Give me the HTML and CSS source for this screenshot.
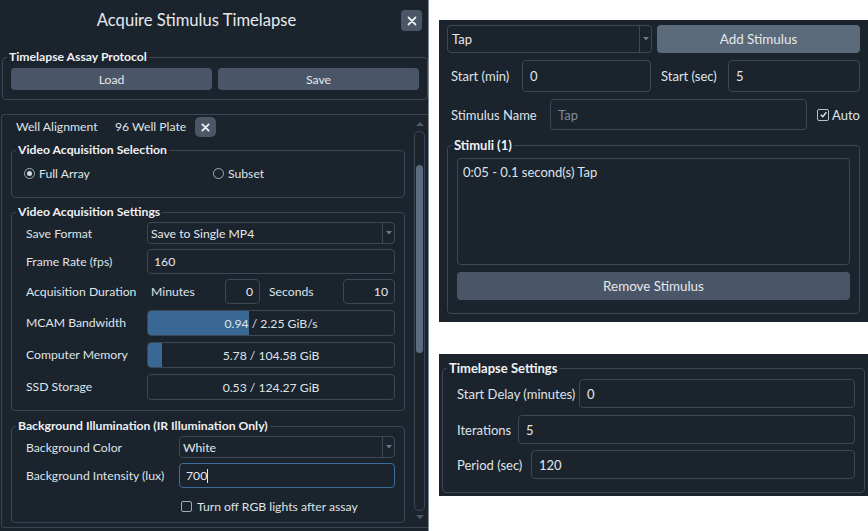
FILE: index.html
```html
<!DOCTYPE html>
<html>
<head>
<meta charset="utf-8">
<link rel="stylesheet" href="styles.css">
</head>
<body>
<div class="page">
  <div class="dialog">
    <div class="titlebar">
      <div class="title">Acquire Stimulus Timelapse</div>
      <div class="xbtn"><svg width="10" height="10" viewBox="0 0 10 10"><path d="M1.5 1.5L8.5 8.5M8.5 1.5L1.5 8.5" stroke="#e8ecf0" stroke-width="1.8" stroke-linecap="round"/></svg></div>
    </div>
    <fieldset class="group protocol">
      <legend>Timelapse Assay Protocol</legend>
      <div class="gbody btnrow">
        <div class="btn">Load</div>
        <div class="btn">Save</div>
      </div>
    </fieldset>
    <div class="scrollarea">
      <div class="scrollcontent">
        <div class="wellrow">
          <span class="well-label">Well Alignment</span>
          <span class="well-value">96 Well Plate</span>
          <span class="xsmall"><svg width="9" height="9" viewBox="0 0 10 10"><path d="M1.5 1.5L8.5 8.5M8.5 1.5L1.5 8.5" stroke="#eef1f4" stroke-width="2" stroke-linecap="round"/></svg></span>
        </div>
        <fieldset class="group sel">
          <legend>Video Acquisition Selection</legend>
          <div class="gbody radiorow">
            <label class="radio"><span class="rcircle on"></span>Full Array</label>
            <label class="radio"><span class="rcircle"></span>Subset</label>
          </div>
        </fieldset>
        <fieldset class="group settings">
          <legend>Video Acquisition Settings</legend>
          <div class="gbody form">
            <div class="lbl">Save Format</div>
            <div class="combo h22"><span class="combo-text">Save to Single MP4</span><span class="combo-arrow"><svg width="6" height="4" viewBox="0 0 6 4"><path d="M0 0H6L3 3.5Z" fill="#6d7885"/></svg></span></div>
            <div class="lbl">Frame Rate (fps)</div>
            <div class="input h25">160</div>
            <div class="lbl">Acquisition Duration</div>
            <div class="duration">
              <span class="dlbl">Minutes</span>
              <div class="input num minutes">0</div>
              <span class="dlbl">Seconds</span>
              <div class="input num seconds">10</div>
            </div>
            <div class="lbl">MCAM Bandwidth</div>
            <div class="bar"><div class="fill" style="width:41%"></div><span class="bartext">0.94 / 2.25 GiB/s</span></div>
            <div class="lbl">Computer Memory</div>
            <div class="bar"><div class="fill" style="width:5.5%"></div><span class="bartext">5.78 / 104.58 GiB</span></div>
            <div class="lbl">SSD Storage</div>
            <div class="bar"><div class="fill" style="width:0%"></div><span class="bartext">0.53 / 124.27 GiB</span></div>
          </div>
        </fieldset>
        <fieldset class="group bg">
          <legend>Background Illumination (IR Illumination Only)</legend>
          <div class="gbody form wide">
            <div class="lbl">Background Color</div>
            <div class="combo h22"><span class="combo-text">White</span><span class="combo-arrow"><svg width="6" height="4" viewBox="0 0 6 4"><path d="M0 0H6L3 3.5Z" fill="#6d7885"/></svg></span></div>
            <div class="lbl">Background Intensity (lux)</div>
            <div class="input h25 focus">700<span class="caret"></span></div>
            <div></div>
            <label class="check rgb"><span class="cbox"></span>Turn off RGB lights after assay</label>
          </div>
        </fieldset>
      </div>
      <div class="scrollbar">
        <div class="sarrow up"></div>
        <div class="track"><div class="handle"></div></div>
        <div class="sarrow down"></div>
      </div>
    </div>
  </div>

  <div class="rightcol">
    <div class="panel stim">
      <div class="row1">
        <div class="combo big"><span class="combo-text">Tap</span><span class="combo-arrow"><svg width="6" height="4" viewBox="0 0 6 4"><path d="M0 0H6L3 3.5Z" fill="#6d7885"/></svg></span></div>
        <div class="btn big light">Add Stimulus</div>
      </div>
      <div class="row2">
        <div class="half h-min"><span class="rlbl">Start (min)</span><div class="input big">0</div></div>
        <div class="half h-sec"><span class="rlbl">Start (sec)</span><div class="input big">5</div></div>
      </div>
      <div class="row3">
        <span class="rlbl name">Stimulus Name</span>
        <div class="input big placeholder">Tap</div>
        <label class="check auto"><span class="cbox checked"><svg width="9" height="9" viewBox="0 0 10 10"><path d="M2 5.2L4.2 7.5L8.2 2.5" stroke="#e6eaee" stroke-width="1.5" fill="none"/></svg></span>Auto</label>
      </div>
      <fieldset class="group stimuli">
        <legend>Stimuli (1)</legend>
        <div class="gbody">
          <div class="listbox">0:05 - 0.1 second(s) Tap</div>
          <div class="btn big remove">Remove Stimulus</div>
        </div>
      </fieldset>
    </div>

    <div class="panel tl">
      <fieldset class="group tlset">
        <legend>Timelapse Settings</legend>
        <div class="gbody">
          <div class="tlrow r1"><span class="rlbl">Start Delay (minutes)</span><div class="input big">0</div></div>
          <div class="tlrow r2"><span class="rlbl">Iterations</span><div class="input big">5</div></div>
          <div class="tlrow r3"><span class="rlbl">Period (sec)</span><div class="input big">120</div></div>
        </div>
      </fieldset>
    </div>
  </div>
</div>
</body>
</html>
```
FILE: styles.css
```css
* { box-sizing: border-box; }
html, body { margin: 0; padding: 0; }
body {
  background: #ffffff;
  width: 868px;
  height: 531px;
  overflow: hidden;
  font-family: Lato, "Open Sans", sans-serif;
  font-size: 12.2px;
  color: #dfe4e9;
}
.page { display: flex; align-items: flex-start; }

/* ---------- left dialog ---------- */
.dialog {
  width: 429px;
  height: 531px;
  background: #1b232d;
  border-right: 1px solid #7f8893;
  display: flex;
  flex-direction: column;
}
.titlebar {
  height: 49px;
  display: flex;
  align-items: flex-start;
  padding-top: 10px;
}
.title {
  flex: 1;
  text-align: center;
  font-size: 16.6px;
  line-height: 21px;
  color: #e6e9ed;
}
.xbtn {
  width: 21px;
  height: 21px;
  margin-left: 8px;
  margin-right: 6px;
  background: #4b5767;
  border-radius: 4px;
  display: flex;
  align-items: center;
  justify-content: center;
}

.group {
  margin: 0;
  padding: 0;
  border: 1px solid #3b4655;
  border-radius: 4px;
  min-width: 0;
}
.group > legend {
  margin-left: 4px;
  padding: 0 2px;
  font-weight: 700;
  font-size: 12.2px;
  line-height: 16px;
  color: #eef1f4;
}
.protocol { margin-left: 2px; width: 426px; }
.protocol .gbody { padding: 3px 8px 9px 8px; }
.btnrow { display: flex; gap: 6px; }
.btn {
  flex: 1;
  height: 22px;
  background: #4a5667;
  border-radius: 4px;
  display: flex;
  align-items: center;
  justify-content: center;
  color: #e4e8ec;
}

.scrollarea {
  margin-top: 14px;
  margin-left: 1px;
  height: 414px;
  border: 1px solid #3b4655;
  border-right: none;
  border-radius: 4px 0 0 4px;
  display: flex;
}
.scrollcontent {
  width: 403px;
  padding-left: 9px;
  padding-bottom: 4px;
}
.wellrow {
  height: 22px;
  display: flex;
  align-items: center;
  padding-left: 5px;
}
.well-label { width: 99px; }
.well-value { width: 80px; }
.xsmall {
  width: 21px;
  height: 20px;
  margin-top: 2px;
  background: #4b5767;
  border-radius: 5px;
  display: flex;
  align-items: center;
  justify-content: center;
}
.sel { margin-top: 5px; width: 394px; }
.sel .gbody { padding: 5px 0 14px 12px; }
.radiorow {
  display: grid;
  grid-template-columns: 189px 1fr;
  align-items: center;
  height: 39px;
  align-content: start;
}
.radio { display: flex; align-items: center; gap: 4px; height: 20px; }
.rcircle {
  width: 11px;
  height: 11px;
  border: 1px solid #a3acb6;
  border-radius: 50%;
  display: flex;
  align-items: center;
  justify-content: center;
}
.rcircle.on::after {
  content: "";
  width: 5px;
  height: 5px;
  border-radius: 50%;
  background: #d3d9df;
}

.settings { margin-top: 6px; width: 394px; }
.settings .gbody { padding: 2px 9px 10px 14px; }
.form {
  display: grid;
  grid-template-columns: 121px 1fr;
  align-items: center;
  row-gap: 5px;
}
.form.wide { grid-template-columns: 153px 1fr; }
.form .lbl { white-space: nowrap; }
.h22 { height: 22px; }
.h25 { height: 25px; }

.input {
  border: 1px solid #3d4857;
  border-radius: 4px;
  background: #1b232d;
  display: flex;
  align-items: center;
  padding-left: 6px;
  color: #e4e8ec;
}
.input.focus { border-color: #3e6d9a; }
.caret {
  display: inline-block;
  width: 1px;
  height: 14px;
  background: #e4e8ec;
}
.combo {
  border: 1px solid #3d4857;
  border-radius: 4px;
  display: flex;
  align-items: stretch;
  color: #e4e8ec;
}
.combo-text { flex: 1; display: flex; align-items: center; padding-left: 3px; }
.combo-arrow {
  width: 12px;
  border-left: 1px solid #3d4857;
  display: flex;
  align-items: center;
  justify-content: center;
}
.duration {
  height: 25px;
  display: flex;
  align-items: center;
}
.dlbl { width: 78px; padding-left: 4px; }
.duration .dlbl:nth-of-type(2) { width: 83px; padding-left: 9px; }
.input.num { height: 25px; justify-content: flex-end; padding-right: 6px; padding-left: 0; }
.minutes { width: 35px; }
.seconds { width: 52px; }
.bar {
  position: relative;
  height: 26px;
  margin-top: 1px;
  border: 1px solid #3d4857;
  border-radius: 4px;
  overflow: hidden;
  display: flex;
  align-items: center;
  justify-content: center;
}
.fill {
  position: absolute;
  left: 0; top: 0; bottom: 0;
  background: #3a6894;
}
.bartext { position: relative; }

.bg { margin-top: 7px; width: 394px; }
.bg .gbody { padding: 2px 9px 6px 14px; }
.check { display: flex; align-items: center; gap: 5px; white-space: nowrap; }
.rgb { height: 20px; margin-top: 3px; padding-left: 2px; }
.cbox {
  width: 11px;
  height: 11px;
  border: 1px solid #a3acb6;
  border-radius: 2px;
  display: flex;
  align-items: center;
  justify-content: center;
  flex-shrink: 0;
}

.scrollbar {
  width: 11px;
  margin-left: 9px;
  margin-right: 3px;
  display: flex;
  flex-direction: column;
  align-items: center;
  padding: 7px 0 8px;
}
.sarrow { width: 0; height: 0; border-left: 4px solid transparent; border-right: 4px solid transparent; }
.sarrow.up { border-bottom: 4px solid #4f5a68; }
.sarrow.down { border-top: 4px solid #4f5a68; }
.track {
  flex: 1;
  width: 11px;
  margin: 5px 0 4px;
  border: 1px solid #3b4655;
  border-radius: 5px;
  padding: 33px 1px 0;
}
.handle {
  height: 188px;
  background: #5c6c7e;
  border-radius: 4px;
}

/* ---------- right panels ---------- */
.rightcol {
  margin-left: 10px;
  width: 429px;
  display: flex;
  flex-direction: column;
}
.panel { background: #1b232d; width: 429px; }
.stim {
  margin-top: 20px;
  height: 302px;
  padding: 5px 8px 0 8px;
  font-size: 13px;
}
.rlbl { white-space: nowrap; flex-shrink: 0; }
.row1 { display: flex; gap: 5px; height: 28px; }
.combo.big { flex: 1; }
.combo.big .combo-text { padding-left: 4px; }
.btn.big { height: 28px; font-size: 13.4px; }
.btn.light { background: #5b6a7b; }
.row2 { display: flex; gap: 5px; height: 32px; margin-top: 7px; }
.half { flex: 1; display: flex; align-items: center; }
.h-min .rlbl { width: 75px; padding-left: 4px; }
.h-sec .rlbl { width: 72px; padding-left: 5px; }
.half .input { flex: 1; height: 32px; }
.input.big { padding-left: 7px; }
.row3 { display: flex; align-items: center; height: 31px; margin-top: 7px; }
.rlbl.name { width: 103px; padding-left: 4px; }
.row3 .input { width: 258px; height: 31px; }
.placeholder { color: #7f8b99; }
.auto { margin-left: 10px; gap: 3px; }
.cbox.checked { width: 12px; height: 12px; border-color: #b8c0c8; }

.stimuli { margin-top: 7px; }
.stimuli > legend { font-size: 13px; margin-left: 4px; }
.stimuli .gbody { padding: 5px 9px 13px 9px; }
.listbox {
  height: 107px;
  border: 1px solid #3d4857;
  border-radius: 4px;
  padding: 4px 5px;
  line-height: 18px;
}
.remove { margin-top: 7px; height: 28px; }

.tl {
  margin-top: 32px;
  height: 142px;
  padding: 6px 3px 3px 3px;
  font-size: 13px;
}
.tlset > legend { font-size: 13px; margin-left: 4px; }
.tlset .gbody { padding: 3px 9px 13px 14px; }
.tlrow { display: flex; align-items: center; height: 29px; }
.tlrow .input { flex: 1; height: 29px; }
.tlrow.r2 { margin-top: 7px; }
.tlrow.r3 { margin-top: 6px; }
.r1 .rlbl { width: 122px; }
.r2 .rlbl { width: 61px; }
.r3 .rlbl { width: 74px; }
```
